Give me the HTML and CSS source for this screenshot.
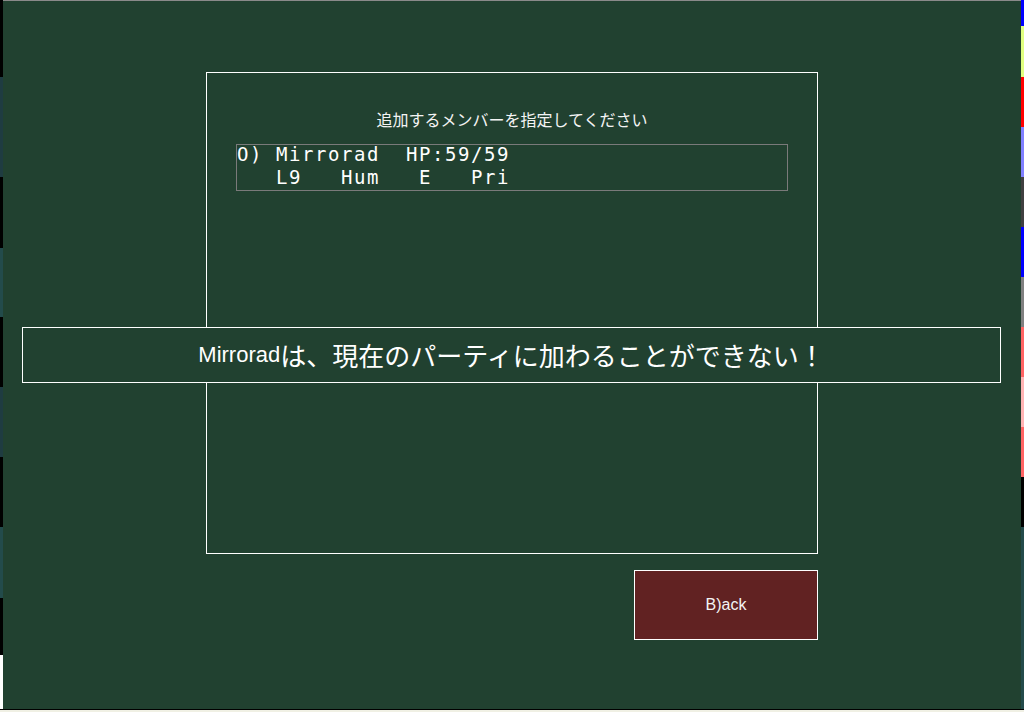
FILE: index.html
```html
<!DOCTYPE html>
<html lang="ja">
<head>
    <meta charset="UTF-8">
    <meta name="viewport" content="width=device-width, initial-scale=1.0">
    <title>Party</title>
    <link rel="stylesheet" href="styles.css">
</head>
<body>
    <div class="screen">
        <!-- left edge: palette strip -->
        <div class="strip strip-left">
            <div class="c-black"></div>
            <div class="c-deep"></div>
            <div class="c-black"></div>
            <div class="c-teal"></div>
            <div class="c-black"></div>
            <div class="c-deep"></div>
            <div class="c-black"></div>
            <div class="c-teal"></div>
            <div class="c-black"></div>
            <div class="c-white"></div>
        </div>

        <main class="field">
            <div class="window">
                <div class="panel">
                    <p class="panel-title">追加するメンバーを指定してください</p>
                    <div class="member-list">
                        <div class="member">
                            <span class="member-line">O) Mirrorad  HP:59/59</span>
                            <span class="member-line">   L9   Hum   E   Pri</span>
                        </div>
                    </div>
                </div>
                <div class="actions">
                    <button class="back-button">B)ack</button>
                </div>
            </div>

            <!-- message over the panel -->
            <div class="notice">
                <span class="notice-name">Mirrorad</span>は、現在のパーティに加わることができない！
            </div>
        </main>

        <!-- right edge: palette strip -->
        <div class="strip strip-right">
            <div class="c-blue"></div>
            <div class="c-lime"></div>
            <div class="c-red"></div>
            <div class="c-violet"></div>
            <div class="c-dark"></div>
            <div class="c-blue"></div>
            <div class="c-gray"></div>
            <div class="c-salmon"></div>
            <div class="c-pink"></div>
            <div class="c-salmon"></div>
            <div class="c-black"></div>
            <div class="c-teal"></div>
        </div>
    </div>
    <div class="taskbar"></div>
</body>
</html>
```

FILE: styles.css
```css
html,
body {
    margin: 0;
    padding: 0;
    width: 1024px;
    height: 712px;
    overflow: hidden;
    background: #f0f0e4;
}

body {
    font-family: "Noto Sans CJK JP", sans-serif;
    color: white;
}

.screen {
    display: grid;
    grid-template-columns: 3px 1fr 3px;
    height: 709px;
}

.taskbar {
    height: 3px;
    border-top: 1px solid black;
    box-sizing: border-box;
    background: #f0f0e4;
}

/* palette strips on both edges */
.strip {
    display: grid;
}

.strip-left {
    grid-template-rows: 77px 100px 71px 69px 70px 70px 70px 71px 57px 1fr;
}

.strip-right {
    grid-template-rows: 26px 51px 50px 50px 50px 50px 50px 50px 50px 50px 50px 1fr;
}

.c-black { background: black; }
.c-deep { background: #1f3c41; }
.c-teal { background: #234b4b; }
.c-white { background: white; }
.c-blue { background: #0000ff; }
.c-lime { background: #e0ff80; }
.c-red { background: #ff0000; }
.c-violet { background: #8080ff; }
.c-dark { background: #404040; }
.c-gray { background: #808080; }
.c-salmon { background: #ff6464; }
.c-pink { background: #ffb4b4; }

/* main green area */
.field {
    position: relative;
    background: #214130;
    border-top: 1px solid #8a8a8a;
    padding-top: 71px;
}

.window {
    width: 612px;
    margin: 0 auto;
}

.panel {
    height: 482px;
    border: 1px solid white;
    box-sizing: border-box;
}

.panel-title {
    margin: 36px 0 15px;
    font-size: 16px;
    line-height: 20px;
    text-align: center;
    color: #f4f4f4;
}

.member-list {
    margin-left: 29px;
    width: 552px;
}

.member {
    display: flex;
    flex-direction: column;
    height: 47px;
    border: 1px solid #7a7a7a;
    box-sizing: border-box;
    font-family: "DejaVu Sans Mono", monospace;
    font-size: 19px;
    font-weight: 500;
    letter-spacing: 1.56px;
    line-height: 22.5px;
    white-space: pre;
}

.member-line:first-child {
    margin-top: -2px;
}

.actions {
    display: flex;
    justify-content: flex-end;
    margin-top: 16px;
}

.back-button {
    width: 184px;
    height: 70px;
    background: #612222;
    border: 1px solid white;
    color: #f4f4f4;
    font-family: "Liberation Sans", Arial, sans-serif;
    font-size: 16px;
    padding: 0;
    cursor: pointer;
}

.notice {
    position: absolute;
    top: 326px;
    left: 19px;
    width: 979px;
    height: 56px;
    box-sizing: border-box;
    border: 1px solid white;
    background: #214130;
    display: flex;
    align-items: center;
    justify-content: center;
    font-size: 26px;
    line-height: 30px;
    white-space: nowrap;
}

.notice-name {
    font-family: "Liberation Sans", sans-serif;
    font-size: 22px;
}
```
